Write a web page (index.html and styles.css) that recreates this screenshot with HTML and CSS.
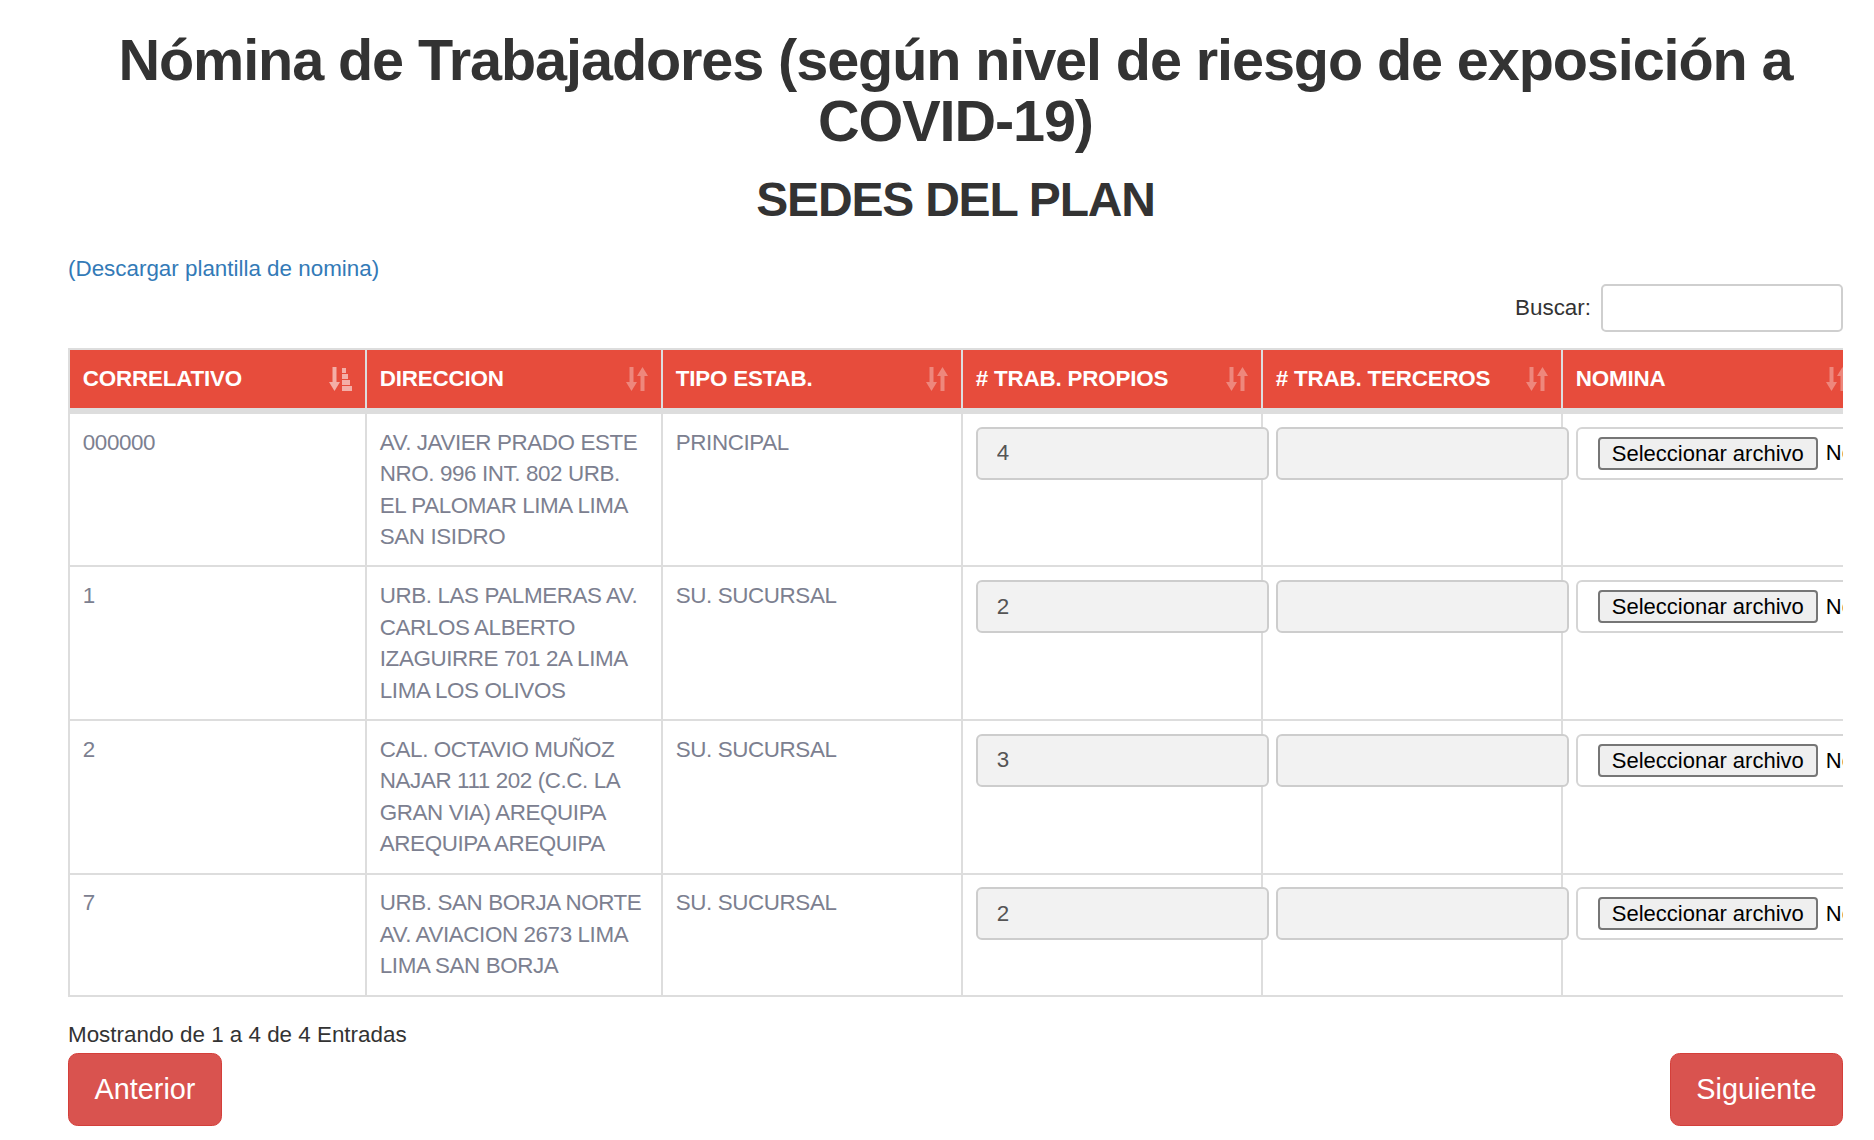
FILE: index.html
```html
<!DOCTYPE html>
<html lang="es">
<head>
<meta charset="utf-8">
<title>Nómina de Trabajadores</title>
<link rel="stylesheet" href="styles.css">
</head>
<body>
<div class="page">
  <div class="container">
    <h1 class="title">Nómina de Trabajadores (según nivel de riesgo de exposición a COVID-19)</h1>
    <h2 class="subtitle">SEDES DEL PLAN</h2>
    <p class="download"><a href="#">(Descargar plantilla de nomina)</a></p>
    <div class="filter">
      <label class="filter-label">Buscar:<input type="search" class="search-input"></label>
    </div>
    <table class="grid">
      <colgroup>
        <col class="col-1"><col class="col-2"><col class="col-3"><col class="col-4"><col class="col-5"><col class="col-6">
      </colgroup>
      <thead>
        <tr>
          <th><div class="th-inner"><span>CORRELATIVO</span>
            <svg class="sort-icon active" viewBox="0 0 23 24" width="23" height="24"><rect x="3.5" y="0" width="4" height="16"/><polygon points="0,15 11,15 5.5,24"/><rect x="13" y="1" width="4" height="5"/><rect x="13" y="7" width="6" height="5"/><rect x="13" y="13" width="8" height="5"/><rect x="13" y="19" width="10" height="5"/></svg></div></th>
          <th><div class="th-inner"><span>DIRECCION</span>
            <svg class="sort-icon" viewBox="0 0 22 24" width="22" height="24"><rect x="3.5" y="0" width="4" height="16"/><polygon points="0,15 11,15 5.5,24"/><polygon points="11,9 22,9 16.5,0"/><rect x="14.5" y="8" width="4" height="16"/></svg></div></th>
          <th><div class="th-inner"><span>TIPO ESTAB.</span>
            <svg class="sort-icon" viewBox="0 0 22 24" width="22" height="24"><rect x="3.5" y="0" width="4" height="16"/><polygon points="0,15 11,15 5.5,24"/><polygon points="11,9 22,9 16.5,0"/><rect x="14.5" y="8" width="4" height="16"/></svg></div></th>
          <th><div class="th-inner"><span># TRAB. PROPIOS</span>
            <svg class="sort-icon" viewBox="0 0 22 24" width="22" height="24"><rect x="3.5" y="0" width="4" height="16"/><polygon points="0,15 11,15 5.5,24"/><polygon points="11,9 22,9 16.5,0"/><rect x="14.5" y="8" width="4" height="16"/></svg></div></th>
          <th><div class="th-inner"><span># TRAB. TERCEROS</span>
            <svg class="sort-icon" viewBox="0 0 22 24" width="22" height="24"><rect x="3.5" y="0" width="4" height="16"/><polygon points="0,15 11,15 5.5,24"/><polygon points="11,9 22,9 16.5,0"/><rect x="14.5" y="8" width="4" height="16"/></svg></div></th>
          <th><div class="th-inner"><span>NOMINA</span>
            <svg class="sort-icon" viewBox="0 0 22 24" width="22" height="24"><rect x="3.5" y="0" width="4" height="16"/><polygon points="0,15 11,15 5.5,24"/><polygon points="11,9 22,9 16.5,0"/><rect x="14.5" y="8" width="4" height="16"/></svg></div></th>
        </tr>
      </thead>
      <tbody>
        <tr>
          <td>000000</td>
          <td>AV. JAVIER PRADO ESTE NRO. 996 INT. 802 URB. EL PALOMAR LIMA LIMA SAN ISIDRO</td>
          <td>PRINCIPAL</td>
          <td><input type="text" class="qty-input" value="4" readonly></td>
          <td><input type="text" class="qty-input" value="" readonly></td>
          <td><div class="file-control"><span class="file-btn">Seleccionar archivo</span><span class="file-name">No se eligió ningún archivo</span></div></td>
        </tr>
        <tr>
          <td>1</td>
          <td>URB. LAS PALMERAS AV. CARLOS ALBERTO IZAGUIRRE 701 2A LIMA LIMA LOS OLIVOS</td>
          <td>SU. SUCURSAL</td>
          <td><input type="text" class="qty-input" value="2" readonly></td>
          <td><input type="text" class="qty-input" value="" readonly></td>
          <td><div class="file-control"><span class="file-btn">Seleccionar archivo</span><span class="file-name">No se eligió ningún archivo</span></div></td>
        </tr>
        <tr>
          <td>2</td>
          <td>CAL. OCTAVIO MUÑOZ NAJAR 111 202 (C.C. LA GRAN VIA) AREQUIPA AREQUIPA AREQUIPA</td>
          <td>SU. SUCURSAL</td>
          <td><input type="text" class="qty-input" value="3" readonly></td>
          <td><input type="text" class="qty-input" value="" readonly></td>
          <td><div class="file-control"><span class="file-btn">Seleccionar archivo</span><span class="file-name">No se eligió ningún archivo</span></div></td>
        </tr>
        <tr>
          <td>7</td>
          <td>URB. SAN BORJA NORTE AV. AVIACION 2673 LIMA LIMA SAN BORJA</td>
          <td>SU. SUCURSAL</td>
          <td><input type="text" class="qty-input" value="2" readonly></td>
          <td><input type="text" class="qty-input" value="" readonly></td>
          <td><div class="file-control"><span class="file-btn">Seleccionar archivo</span><span class="file-name">No se eligió ningún archivo</span></div></td>
        </tr>
      </tbody>
    </table>
    <div class="info">Mostrando de 1 a 4 de 4 Entradas</div>
    <div class="pager">
      <button type="button" class="btn">Anterior</button>
      <button type="button" class="btn">Siguiente</button>
    </div>
  </div>
</div>
</body>
</html>
```

FILE: styles.css
```css
html, body {
  margin: 0;
  padding: 0;
  background: #fff;
}

body {
  font-family: "Liberation Sans", Arial, Helvetica, sans-serif;
  font-size: 22.4px;
  line-height: 32px;
  color: #333;
  overflow: hidden;
}

.page {
  width: 1843px;
  overflow: hidden;
}

.container {
  padding-left: 68px;
}

.title {
  margin: 29.5px 0 22.5px;
  font-size: 57.6px;
  line-height: 61px;
  font-weight: bold;
  letter-spacing: -1.1px;
  text-align: center;
  color: #333;
}

.subtitle {
  margin: 0;
  font-size: 48px;
  line-height: 52.8px;
  font-weight: bold;
  letter-spacing: -1.2px;
  text-align: center;
  color: #333;
}

.download {
  margin: 26.4px 0 0;
}

.download a {
  color: #337ab7;
  text-decoration: none;
}

.filter {
  display: flex;
  justify-content: flex-end;
  margin-top: -1px;
}

.filter-label {
  display: flex;
  align-items: center;
  color: #333;
}

.search-input {
  margin: 0 0 0 10px;
  width: 242px;
  height: 48px;
  box-sizing: border-box;
  border: 2px solid #cfcfcf;
  border-radius: 5px;
  padding: 0 14px;
  font-family: "Liberation Sans", Arial, sans-serif;
  font-size: 19.2px;
  background: #fff;
  outline: none;
}

.grid {
  margin-top: 16px;
  width: 1795px;
  table-layout: fixed;
  border-collapse: separate;
  border-spacing: 0;
  border-left: 2px solid #ddd;
  border-top: 2px solid #ddd;
}

.col-1 { width: 297px; }
.col-2 { width: 296px; }
.col-3 { width: 300px; }
.col-4 { width: 300px; }
.col-5 { width: 300px; }
.col-6 { width: 300px; }

.grid th,
.grid td {
  padding: 12.8px;
  border-right: 2px solid #ddd;
  border-bottom: 2px solid #ddd;
  text-align: left;
  vertical-align: top;
}

.grid th {
  background: #e74c3c;
  color: #fff;
  font-weight: bold;
  letter-spacing: -0.2px;
  line-height: 32px;
  border-bottom: 6px solid #ddd;
  white-space: nowrap;
}

.th-inner {
  display: flex;
  align-items: center;
  justify-content: space-between;
}

.sort-icon {
  flex: none;
  fill: #fff;
  opacity: 0.33;
}

.sort-icon.active {
  opacity: 0.55;
}

.grid td {
  color: #7c8090;
  line-height: 31.5px;
  letter-spacing: -0.4px;
}

.qty-input {
  display: block;
  width: 293px;
  height: 53px;
  box-sizing: border-box;
  margin: 0;
  padding: 0 19px;
  border: 2px solid #cdcdcd;
  border-radius: 6px;
  background: #f2f2f2;
  font-family: "Liberation Sans", Arial, sans-serif;
  font-size: 22.4px;
  color: #555;
  outline: none;
}

.file-control {
  display: flex;
  align-items: center;
  width: 293px;
  height: 53px;
  box-sizing: border-box;
  padding: 0 20px;
  border: 2px solid #d5d5d5;
  border-radius: 6px;
  background: #fff;
  color: #000;
  letter-spacing: 0;
  white-space: nowrap;
  overflow: hidden;
}

.file-btn {
  flex: none;
  height: 33px;
  box-sizing: border-box;
  padding: 0 12px;
  border: 2px solid #767676;
  border-radius: 4px;
  background: #efefef;
  font-size: 22px;
  line-height: 29px;
  color: #000;
}

.file-name {
  margin-left: 8px;
  font-size: 22px;
  color: #000;
}

.info {
  margin-top: 22px;
  color: #333;
}

.pager {
  display: flex;
  justify-content: space-between;
  margin-top: 2px;
}

.btn {
  margin: 0;
  padding: 16.5px 25.6px;
  border: 1px solid #d43f3a;
  border-radius: 9.6px;
  background: #d9534f;
  color: #fff;
  font-family: "Liberation Sans", Arial, sans-serif;
  font-size: 28.8px;
  line-height: 38.4px;
  cursor: pointer;
}
```
